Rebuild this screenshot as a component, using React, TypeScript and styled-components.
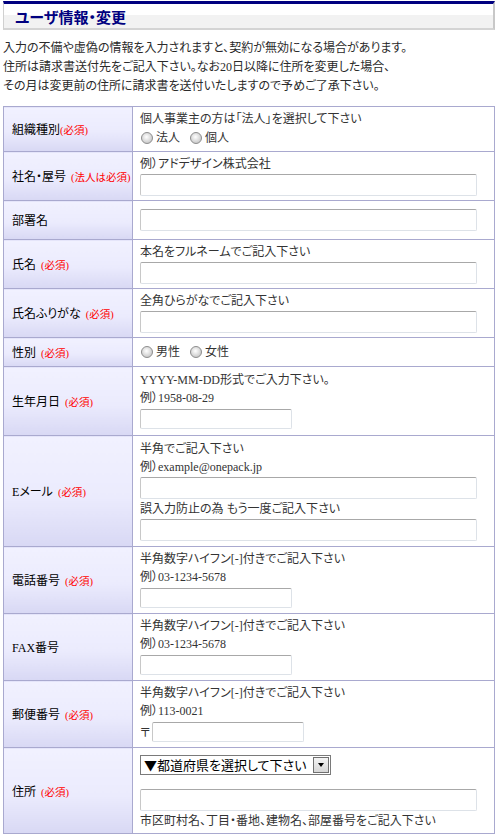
import styled, { createGlobalStyle } from 'styled-components';

const GlobalStyle = createGlobalStyle`
  html, body {
    margin: 0;
    padding: 0;
    background: #fff;
  }
  body {
    font-family: "Liberation Serif", "Noto Sans CJK JP", serif;
    font-size: 12px;
    color: #333;
    font-feature-settings: "palt";
  }
`;

const Page = styled.div`
  width: 492px;
  padding: 1px 3px 0 3px;
`;

const Heading = styled.div`
  border-top: 3px solid #000080;
  border-left: 1px solid #d0d0d0;
  border-right: 2px solid #c8c8c8;
  border-bottom: 2px solid #d4d4d4;
  background: linear-gradient(to bottom, #fff 0, #fff 45%, #f2f2f2 45%, #f2f2f2 100%);
  height: 24px;
  display: flex;
  align-items: center;
  padding-left: 11px;
`;

const HeadTitle = styled.h1`
  margin: 0;
  font-family: "Noto Sans CJK JP", sans-serif;
  font-size: 15px;
  font-weight: bold;
  color: #000080;
`;

const Intro = styled.p`
  margin: 9px 0 10px 0;
  line-height: 19px;
  color: #2a2a2a;
`;

const FormTable = styled.table`
  width: 492px;
  border-collapse: collapse;
  table-layout: fixed;
  border: 1px solid #a9a9cf;
`;

const LabelCell = styled.th`
  width: 129px;
  box-sizing: border-box;
  border: 1px solid #a9a9cf;
  background: linear-gradient(to bottom, #f1f1ff 0%, #ebebfd 55%, #d8d8f4 100%);
  text-align: left;
  vertical-align: middle;
  font-weight: normal;
  color: #000;
  font-size: 12px;
  padding: 0 4px 0 8px;
  white-space: nowrap;
`;

const Req = styled.span<{ $gap?: boolean }>`
  color: #f00;
  font-size: 10.5px;
  margin-left: ${(p) => (p.$gap ? '5px' : '0')};
`;

const FieldCell = styled.td<{ $pad?: number }>`
  border: 1px solid #a9a9cf;
  vertical-align: top;
  padding: ${(p) => p.$pad ?? 3}px 6px ${(p) => p.$pad ?? 3}px 7px;
  color: #333;
`;

const Line = styled.div`
  line-height: 18px;
  height: 18px;
  white-space: nowrap;
`;

const TextInput = styled.input<{ $short?: boolean }>`
  display: block;
  box-sizing: border-box;
  width: ${(p) => (p.$short ? '152px' : '337px')};
  height: ${(p) => (p.$short ? '20px' : '22px')};
  margin: ${(p) => (p.$short ? '2px 0' : '1px 0')};
  border: 1px solid #dde2e8;
  border-top-color: #a8a8a8;
  border-left-color: #c8c8c8;
  border-radius: 2px;
  background: #fff;
  padding: 0 3px;
  font-size: 12px;
`;

const RadioLine = styled.div`
  display: flex;
  align-items: center;
  height: 20px;
`;

const RadioLabel = styled.label`
  display: inline-flex;
  align-items: center;
  margin-right: 9px;
  color: #333;
  line-height: 18px;
`;

const Radio = styled.input.attrs({ type: 'radio' })`
  appearance: none;
  width: 12px;
  height: 12px;
  margin: 0 3px 0 1px;
  border-radius: 50%;
  border: 1px solid #8e8e8e;
  background: radial-gradient(circle at 45% 40%, #ffffff 0%, #e6e6e6 35%, #b8b8b8 100%);
  box-sizing: border-box;
`;

const PostalRow = styled.div`
  display: flex;
  align-items: center;
  gap: 1px;
`;

const PostalMark = styled.span`
  width: 11px;
  color: #333;
`;

const SelectBox = styled.div`
  display: flex;
  align-items: stretch;
  width: 191px;
  height: 20px;
  box-sizing: border-box;
  border: 1px solid #7a7a7a;
  margin: 4px 0 14px 0;
  background: #fff;
`;

const SelectText = styled.span`
  flex: 1;
  font-family: "Noto Sans CJK JP", sans-serif;
  font-size: 13px;
  line-height: 18px;
  color: #000;
  padding-left: 3px;
  white-space: nowrap;
  overflow: hidden;
`;

const SelectArrow = styled.span`
  width: 16px;
  margin: 1px;
  box-sizing: border-box;
  border: 1px solid #707070;
  background: linear-gradient(to bottom, #f4f4f4, #d6d6d6);
  display: flex;
  align-items: center;
  justify-content: center;
`;

const Triangle = styled.span`
  width: 0;
  height: 0;
  border-left: 3.5px solid transparent;
  border-right: 3.5px solid transparent;
  border-top: 4px solid #000;
`;

const Row = ({
  label,
  req,
  gap = true,
  pad,
  children,
}: {
  label: string;
  req?: string;
  gap?: boolean;
  pad?: number;
  children: React.ReactNode;
}) => (
  <tr>
    <LabelCell>
      {label}
      {req && <Req $gap={gap}>({req})</Req>}
    </LabelCell>
    <FieldCell $pad={pad}>{children}</FieldCell>
  </tr>
);

export default function App() {
  return (
    <Page>
      <GlobalStyle />
      <Heading>
        <HeadTitle>ユーザ情報・変更</HeadTitle>
      </Heading>
      <Intro>
        入力の不備や虚偽の情報を入力されますと、契約が無効になる場合があります。
        <br />
        住所は請求書送付先をご記入下さい。なお20日以降に住所を変更した場合、
        <br />
        その月は変更前の住所に請求書を送付いたしますので予めご了承下さい。
      </Intro>
      <FormTable>
        <colgroup>
          <col style={{ width: 129 }} />
          <col />
        </colgroup>
        <tbody>
          <Row label="組織種別" req="必須" gap={false}>
            <Line>個人事業主の方は「法人」を選択して下さい</Line>
            <RadioLine>
              <RadioLabel>
                <Radio name="org" />
                法人
              </RadioLabel>
              <RadioLabel>
                <Radio name="org" />
                個人
              </RadioLabel>
            </RadioLine>
          </Row>
          <Row label="社名・屋号" req="法人は必須">
            <Line>例）アドデザイン株式会社</Line>
            <TextInput />
          </Row>
          <Row label="部署名" pad={7}>
            <TextInput />
          </Row>
          <Row label="氏名" req="必須">
            <Line>本名をフルネームでご記入下さい</Line>
            <TextInput />
          </Row>
          <Row label="氏名ふりがな" req="必須">
            <Line>全角ひらがなでご記入下さい</Line>
            <TextInput />
          </Row>
          <Row label="性別" req="必須" pad={4}>
            <RadioLine>
              <RadioLabel>
                <Radio name="sex" />
                男性
              </RadioLabel>
              <RadioLabel>
                <Radio name="sex" />
                女性
              </RadioLabel>
            </RadioLine>
          </Row>
          <Row label="生年月日" req="必須" pad={4}>
            <Line>YYYY-MM-DD形式でご入力下さい。</Line>
            <Line>例）1958-08-29</Line>
            <TextInput $short />
          </Row>
          <Row label="Eメール" req="必須" pad={4}>
            <Line>半角でご記入下さい</Line>
            <Line>例）example@onepack.jp</Line>
            <TextInput />
            <Line>誤入力防止の為 もう一度ご記入下さい</Line>
            <TextInput />
          </Row>
          <Row label="電話番号" req="必須">
            <Line>半角数字ハイフン[-]付きでご記入下さい</Line>
            <Line>例）03-1234-5678</Line>
            <TextInput $short />
          </Row>
          <Row label="FAX番号">
            <Line>半角数字ハイフン[-]付きでご記入下さい</Line>
            <Line>例）03-1234-5678</Line>
            <TextInput $short />
          </Row>
          <Row label="郵便番号" req="必須">
            <Line>半角数字ハイフン[-]付きでご記入下さい</Line>
            <Line>例）113-0021</Line>
            <PostalRow>
              <PostalMark>〒</PostalMark>
              <TextInput $short />
            </PostalRow>
          </Row>
          <Row label="住所" req="必須">
            <SelectBox>
              <SelectText>▼都道府県を選択して下さい</SelectText>
              <SelectArrow>
                <Triangle />
              </SelectArrow>
            </SelectBox>
            <TextInput />
            <Line>市区町村名、丁目・番地、建物名、部屋番号をご記入下さい</Line>
          </Row>
        </tbody>
      </FormTable>
    </Page>
  );
}
